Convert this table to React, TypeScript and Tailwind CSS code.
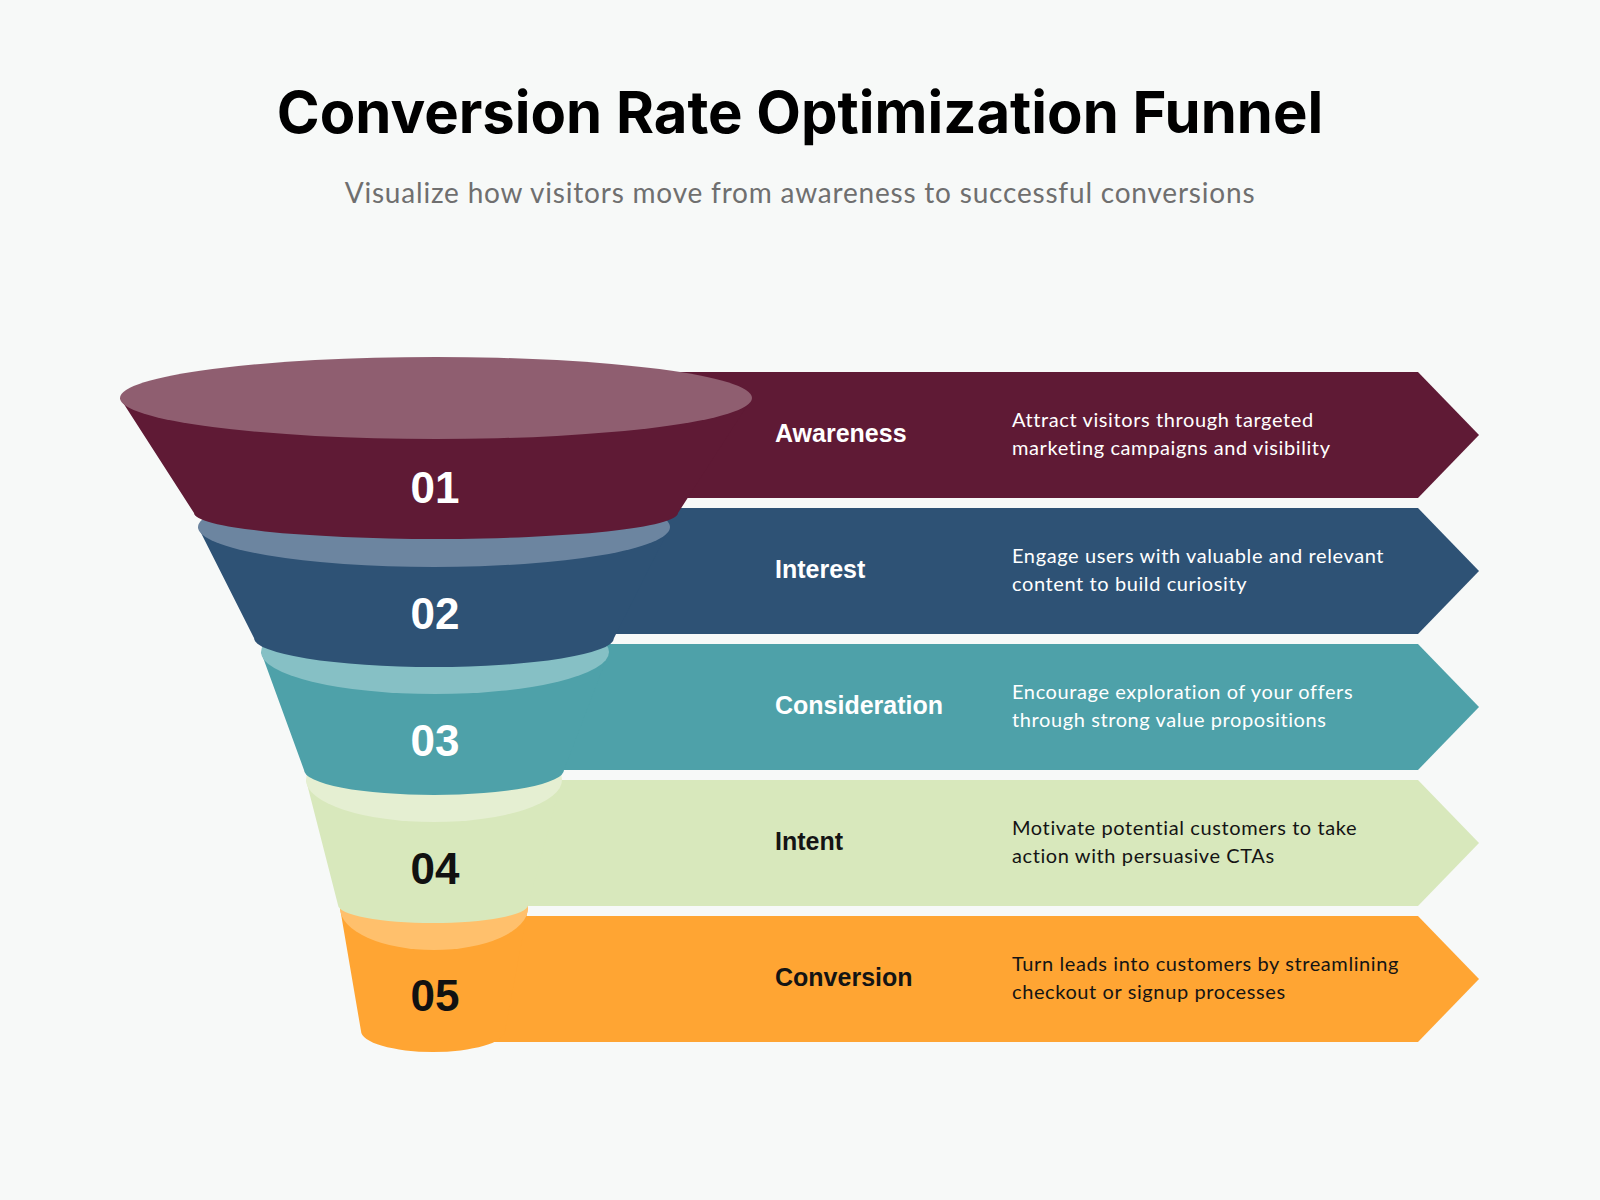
import React from "react";

type Seg = {
  top: [number, number, number, number]; // cx, cy, rx, ry
  bot: [number, number, number, number];
  light: string;
  dark: string;
  num: string;
  numY: number;
  numFill: string;
};

const segs: Seg[] = [
  { top: [436, 398, 316, 41], bot: [436, 513, 242, 26], light: "#8f5e70", dark: "#5f1a35", num: "01", numY: 487, numFill: "#ffffff" },
  { top: [434, 527, 236, 40], bot: [434, 638, 180, 29], light: "#6c85a0", dark: "#2e5275", num: "02", numY: 613, numFill: "#ffffff" },
  { top: [435, 652, 174, 42], bot: [434, 770, 130, 25], light: "#86c0c5", dark: "#4ea1a9", num: "03", numY: 740, numFill: "#ffffff" },
  { top: [434, 780, 128, 42], bot: [433, 905, 95, 18], light: "#e5efd2", dark: "#d8e8bc", num: "04", numY: 868, numFill: "#111111" },
  { top: [434, 908, 94, 42], bot: [433, 1031, 72, 21], light: "#ffc06c", dark: "#ffa533", num: "05", numY: 995, numFill: "#111111" },
];

const bands = [
  { title: "Awareness", desc: ["Attract visitors through targeted", "marketing campaigns and visibility"], bg: "bg-[#5f1a35]", text: "text-white" },
  { title: "Interest", desc: ["Engage users with valuable and relevant", "content to build curiosity"], bg: "bg-[#2e5275]", text: "text-white" },
  { title: "Consideration", desc: ["Encourage exploration of your offers", "through strong value propositions"], bg: "bg-[#4ea1a9]", text: "text-white" },
  { title: "Intent", desc: ["Motivate potential customers to take", "action with persuasive CTAs"], bg: "bg-[#d8e8bc]", text: "text-[#141414]" },
  { title: "Conversion", desc: ["Turn leads into customers by streamlining", "checkout or signup processes"], bg: "bg-[#ffa533]", text: "text-[#141414]" },
];

function Funnel() {
  const order = [...segs].reverse();
  return (
    <svg
      className="absolute left-0 top-0 pointer-events-none"
      width={760}
      height={730}
      viewBox="0 340 760 730"
    >
      {order.map((s) => {
        const [tcx, tcy, trx, try_] = s.top;
        const [bcx, bcy, brx, bry] = s.bot;
        const d = `M ${tcx - trx} ${tcy} L ${bcx - brx} ${bcy} A ${brx} ${bry} 0 0 0 ${bcx + brx} ${bcy} L ${tcx + trx} ${tcy} Z`;
        return (
          <g key={s.num}>
            <path d={d} fill={s.dark} />
            <ellipse cx={tcx} cy={tcy} rx={trx} ry={try_} fill={s.light} />
          </g>
        );
      })}
      {segs.map((s) => (
        <text
          key={"t" + s.num}
          x={435}
          y={s.numY}
          textAnchor="middle"
          dominantBaseline="central"
          fill={s.numFill}
          className="font-['Liberation_Sans',Arial,sans-serif] font-bold text-[44px]"
        >
          {s.num}
        </text>
      ))}
    </svg>
  );
}

export default function App() {
  return (
    <div className="w-full min-h-[1200px] bg-[#f7f9f8] flex flex-col items-center font-['Lato',sans-serif]">
      <div className="w-[1600px] flex flex-col items-center pt-[77px]">
        <h1 className="text-[58px] leading-[70px] font-bold text-black font-['Inter',sans-serif] tracking-[0px]">
          Conversion Rate Optimization Funnel
        </h1>
        <p className="mt-[28px] text-[28px] leading-[34px] tracking-[0.8px] text-[#6f6f6f] font-['Lato',sans-serif]">
          Visualize how visitors move from awareness to successful conversions
        </p>
        <div className="relative w-[1600px] h-[730px] mt-[131px]">
          <div className="flex flex-col gap-[10px] pt-[32px]">
            {bands.map((b) => (
              <div
                key={b.title}
                className={`ml-[440px] w-[1039px] h-[126px] ${b.bg} ${b.text} [clip-path:polygon(0_0,978px_0,1039px_50%,978px_100%,0_100%)]`}
              >
                <div className="h-full grid grid-cols-[237px_1fr] items-center pl-[335px]">
                  <div className="text-[25px] font-bold font-['Liberation_Sans',Arial,sans-serif] pb-[3px]">{b.title}</div>
                  <div className="text-[20px] leading-[28px] tracking-[0.6px] font-['Lato',sans-serif] pb-[4px]">
                    {b.desc.map((l) => (
                      <div key={l}>{l}</div>
                    ))}
                  </div>
                </div>
              </div>
            ))}
          </div>
          <Funnel />
        </div>
      </div>
    </div>
  );
}
